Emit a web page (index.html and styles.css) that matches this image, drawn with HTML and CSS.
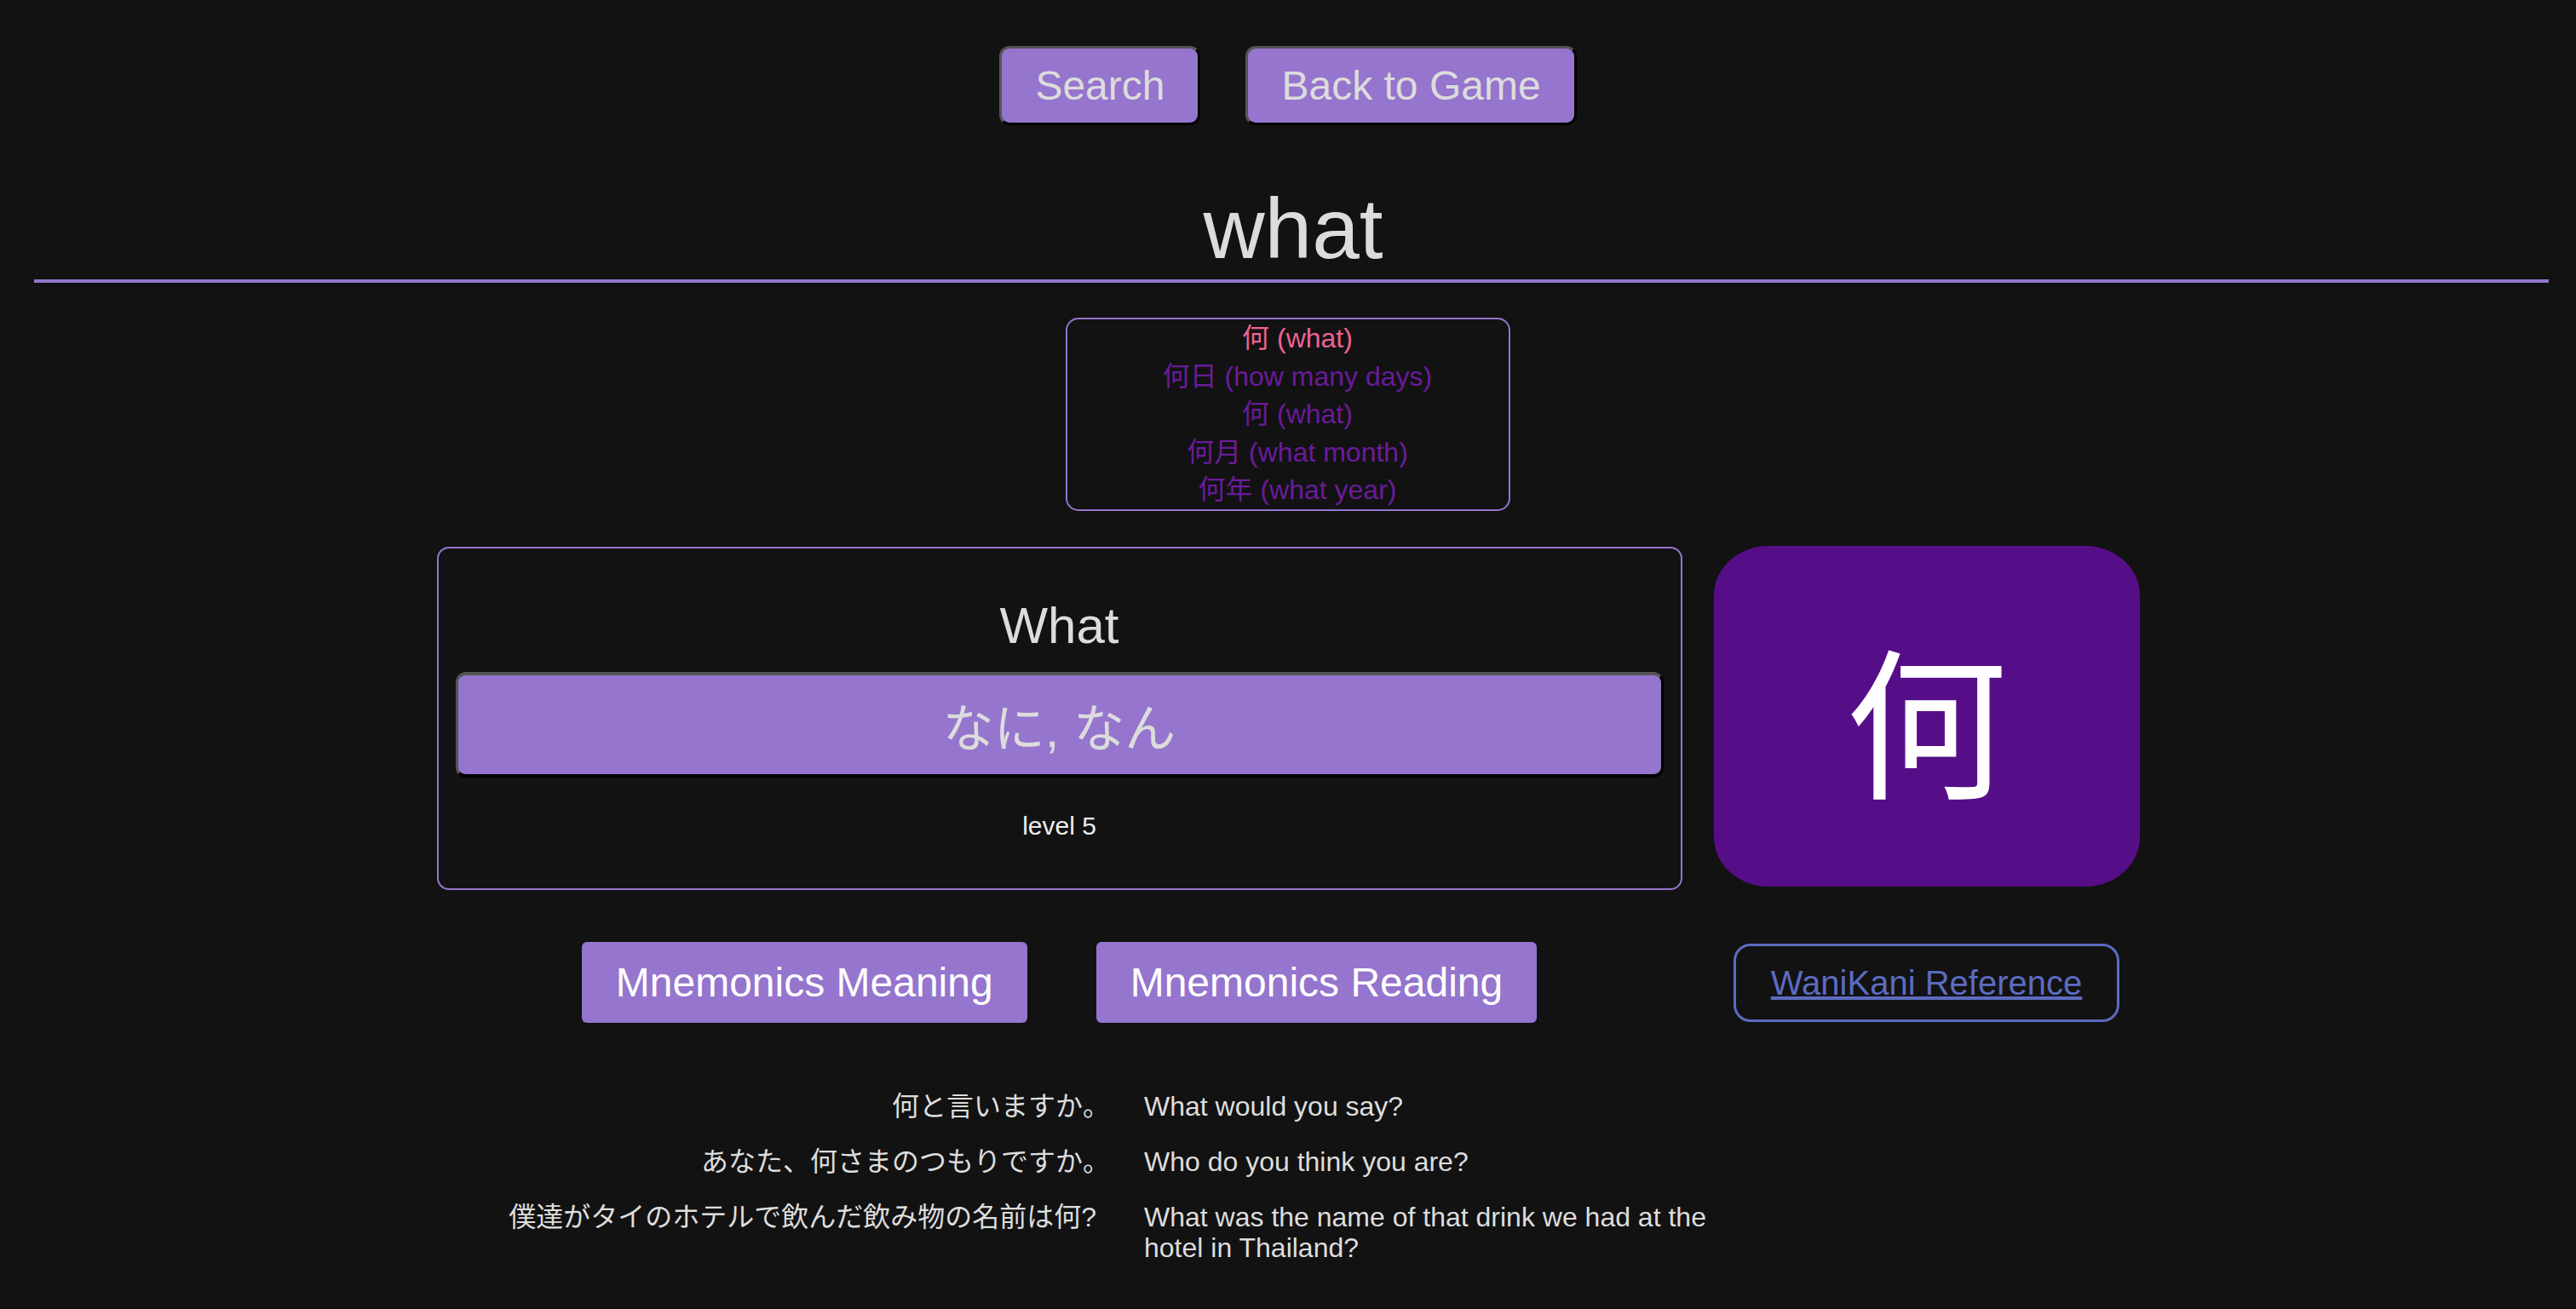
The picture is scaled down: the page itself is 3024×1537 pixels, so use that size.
FILE: index.html
```html
<!DOCTYPE html>
<html lang="en">
<head>
<meta charset="utf-8">
<title>what</title>
<link rel="stylesheet" href="styles.css">
</head>
<body>
<nav class="nav">
  <button class="nav-btn">Search</button>
  <button class="nav-btn">Back to Game</button>
</nav>
<h1 class="title">what</h1>
<hr class="rule">
<div class="related">
  <div class="related-item current">何 (what)</div>
  <div class="related-item">何日 (how many days)</div>
  <div class="related-item">何 (what)</div>
  <div class="related-item">何月 (what month)</div>
  <div class="related-item">何年 (what year)</div>
</div>
<section class="main-grid">
  <div class="card">
    <div class="meaning">What</div>
    <div class="reading">なに, なん</div>
    <div class="level">level 5</div>
  </div>
  <div class="kanji-box"><span class="kanji">何</span></div>
  <div class="mnemonics">
    <button class="mn-btn">Mnemonics Meaning</button>
    <button class="mn-btn">Mnemonics Reading</button>
  </div>
  <div class="ref-cell">
    <a class="ref-link" href="#">WaniKani Reference</a>
  </div>
</section>
<section class="sentences">
  <div class="ja">何と言いますか<span class="half">。</span></div>
  <div class="en">What would you say?</div>
  <div class="ja">あなた、何さまのつもりですか<span class="half">。</span></div>
  <div class="en">Who do you think you are?</div>
  <div class="ja">僕達がタイのホテルで飲んだ飲み物の名前は何?</div>
  <div class="en">What was the name of that drink we had at the hotel in Thailand?</div>
</section>
</body>
</html>
```
FILE: styles.css
```css
html, body {
  margin: 0;
  padding: 0;
  background: #121212;
}
body {
  font-family: "Liberation Sans", "Noto Sans CJK JP", sans-serif;
  color: #dcdcdc;
  min-height: 1537px;
}
.nav {
  display: flex;
  justify-content: center;
  gap: 53px;
  padding-top: 54px;
}
.nav-btn {
  font-family: "Liberation Sans", sans-serif;
  font-size: 48px;
  line-height: 55px;
  padding: 16px 39px;
  background: #9575cd;
  color: #dcdcdc;
  border: 3px solid;
  border-color: #555 #000 #000 #555;
  border-radius: 12px;
}
.title {
  margin: 66px 0 0;
  padding-left: 12px;
  font-size: 100px;
  line-height: 110px;
  font-weight: 400;
  text-align: center;
  color: #dcdcdc;
}
.rule {
  margin: 5px 32px 0 40px;
  height: 4px;
  border: none;
  background: #9575cd;
}
.related {
  box-sizing: border-box;
  width: 522px;
  margin: 41px auto 0;
  padding-left: 22px;
  border: 2px solid #9575cd;
  border-radius: 15px;
  text-align: center;
  font-size: 32px;
  line-height: 44.6px;
}
.related-item {
  color: #6a1b9a;
}
.related-item.current {
  color: #f06292;
}
.main-grid {
  display: grid;
  grid-template-columns: 1462px 500px;
  column-gap: 37px;
  row-gap: 61px;
  justify-content: center;
  margin-top: 41px;
  align-items: start;
}
.card {
  box-sizing: border-box;
  height: 403px;
  margin-top: 1px;
  border: 2px solid #9575cd;
  border-radius: 14px;
  padding: 56px 20px 0;
  text-align: center;
}
.meaning {
  font-size: 60px;
  line-height: 69px;
  color: #dcdcdc;
}
.reading {
  margin-top: 20px;
  height: 124px;
  box-sizing: border-box;
  display: flex;
  align-items: center;
  justify-content: center;
  background: #9575cd;
  border: 3px solid;
  border-width: 4px 3px 4px 3px;
  border-color: #555 #000 #000 #555;
  border-radius: 12px;
  font-size: 60px;
  color: #dcdcdc;
}
.level {
  margin-top: 39px;
  font-size: 30px;
  line-height: 35px;
  color: #eeeeee;
}
.kanji-box {
  height: 400px;
  border-radius: 64px / 58px;
  background: #560e88;
  display: flex;
  align-items: center;
  justify-content: center;
}
.kanji {
  font-family: "Noto Sans CJK JP", sans-serif;
  font-size: 190px;
  line-height: 1;
  color: #ffffff;
  margin-top: 0;
}
.mnemonics {
  display: flex;
  justify-content: center;
  gap: 81px;
}
.mn-btn {
  font-family: "Liberation Sans", sans-serif;
  font-size: 48px;
  line-height: 55px;
  padding: 20px 40px;
  background: #9575cd;
  color: #ffffff;
  border: none;
  border-radius: 6px;
}
.ref-cell {
  display: flex;
  justify-content: center;
  padding-top: 2px;
}
.ref-link {
  display: inline-block;
  font-size: 40px;
  line-height: 46px;
  padding: 20px 41px;
  border: 3px solid #5c6bc0;
  border-radius: 20px;
  color: #5c6bc0;
  text-decoration: underline;
}
.sentences {
  display: grid;
  grid-template-columns: 700px 700px;
  column-gap: 56px;
  row-gap: 29px;
  margin: 80px 0 0 587px;
  font-size: 32px;
  line-height: 36px;
  color: #dddddd;
}
.ja {
  text-align: right;
}
.half {
  font-feature-settings: "halt" 1;
}
.en {
  text-align: left;
}
```
